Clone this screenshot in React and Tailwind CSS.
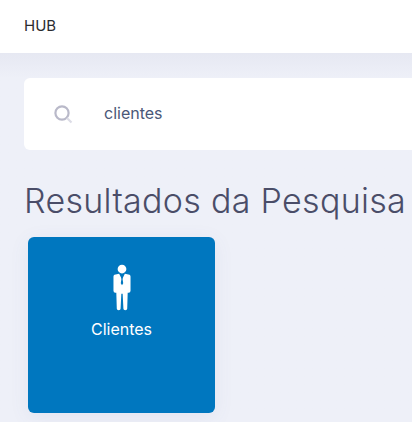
export default function App() {
  return (
    <div className="w-[412px] h-[422px] overflow-hidden bg-[#eef0f8] font-['Inter','Noto_Sans',sans-serif]">
      <header className="h-[53px] bg-white flex items-center pl-6 text-[15px] text-[#2b2b30]">HUB</header>
      <main className="bg-gradient-to-b from-[#e6e8f2] to-[#eef0f8] to-[25px] pt-[25px]">
        <div className="ml-6 h-[72px] bg-white rounded-l-[6px] flex items-center">
          <svg className="ml-[30px] w-[19px] h-[19px]" viewBox="0 0 19 19" fill="none">
            <circle cx="8" cy="8" r="6.6" stroke="#b9b9c9" strokeWidth="2.2" />
            <path d="M13 13l4.5 4.5" stroke="#dcdce6" strokeWidth="2.2" />
          </svg>
          <span className="ml-[31px] pb-[2px] text-[16px] text-[#4a5878]">clientes</span>
        </div>
        <h1 className="mt-[27px] ml-6 h-[48px] leading-[48px] text-[34px] font-light whitespace-nowrap text-[#4a4d68] tracking-[0.3px]">Resultados da Pesquisa</h1>
        <div className="mt-[12px] ml-7 w-[187px] h-[176px] bg-[#0077bf] rounded-[6px] flex flex-col items-center pt-[26px] shadow-[0_4px_20px_rgba(90,100,150,0.08)]">
          <svg className="w-[18px] h-[49px]" viewBox="0 0 19 49" fill="white">
            <circle cx="9.5" cy="5" r="4.6" />
            <path d="M1.5 11 L6.5 10 L9.5 16 L12.5 10 L17.5 11 Q18.5 11.5 18.5 13 L18.5 28 Q18.5 30 16.5 30 L15.5 30 L15 47 Q15 48.5 13 48.5 Q11 48.5 11 47 L10.2 31 L8.8 31 L8 47 Q8 48.5 6 48.5 Q4 48.5 4 47 L3.5 30 L2.5 30 Q0.5 30 0.5 28 L0.5 13 Q0.5 11.5 1.5 11 Z" />
            <path d="M8.6 13 L10.4 13 L10 15 L10.8 20 L9.5 22 L8.2 20 L9 15 Z" fill="#0077bf" />
          </svg>
          <span className="mt-[5px] text-[16px] text-white">Clientes</span>
        </div>
      </main>
    </div>
  );
}
